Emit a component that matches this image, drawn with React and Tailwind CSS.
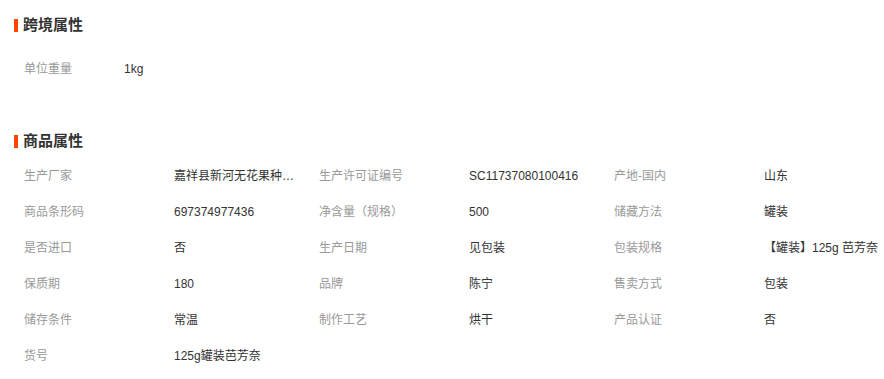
import React from 'react';

const crossBorder = [{ label: '单位重量', value: '1kg' }];

const goodsAttrs = [
  { label: '生产厂家', value: '嘉祥县新河无花果种植专业合作社' },
  { label: '生产许可证编号', value: 'SC11737080100416' },
  { label: '产地-国内', value: '山东' },
  { label: '商品条形码', value: '697374977436' },
  { label: '净含量（规格）', value: '500' },
  { label: '储藏方法', value: '罐装' },
  { label: '是否进口', value: '否' },
  { label: '生产日期', value: '见包装' },
  { label: '包装规格', value: '【罐装】125g 芭芳奈' },
  { label: '保质期', value: '180' },
  { label: '品牌', value: '陈宁' },
  { label: '售卖方式', value: '包装' },
  { label: '储存条件', value: '常温' },
  { label: '制作工艺', value: '烘干' },
  { label: '产品认证', value: '否' },
  { label: '货号', value: '125g罐装芭芳奈' },
];

const SectionTitle = ({ children, className }) => (
  <div className={`flex items-center h-5 ${className}`}>
    <span className="w-1 h-[13px] bg-[#ff4400]" />
    <span className="ml-[5px] text-[15px] font-bold text-[#333] leading-5">{children}</span>
  </div>
);

const App = () => {
  return (
    <div
      className="w-[884px] h-[379px] bg-white pl-[14px] overflow-hidden"
      style={{ fontFamily: '"Liberation Sans", "Noto Sans CJK SC", sans-serif' }}
    >
      {/* 跨境属性 */}
      <SectionTitle className="mt-[15px]">跨境属性</SectionTitle>
      <div className="mt-4 pl-[10px]">
        {crossBorder.map((item) => (
          <div key={item.label} className="flex items-center h-9 text-xs">
            <span className="w-[100px] text-[#999]">{item.label}</span>
            <span className="text-[#333]">{item.value}</span>
          </div>
        ))}
      </div>

      {/* 商品属性 */}
      <SectionTitle className="mt-[44px]">商品属性</SectionTitle>
      <div className="mt-[7px] pl-[10px] grid grid-cols-[295px_295px_295px]">
        {goodsAttrs.map((item) => (
          <div key={item.label} className="flex items-center h-9 text-xs">
            <span className="w-[150px] shrink-0 text-[#999]">{item.label}</span>
            <span className="max-w-[125px] whitespace-nowrap overflow-hidden text-ellipsis text-[#333]">
              {item.value}
            </span>
          </div>
        ))}
      </div>
    </div>
  );
};

export default App;
